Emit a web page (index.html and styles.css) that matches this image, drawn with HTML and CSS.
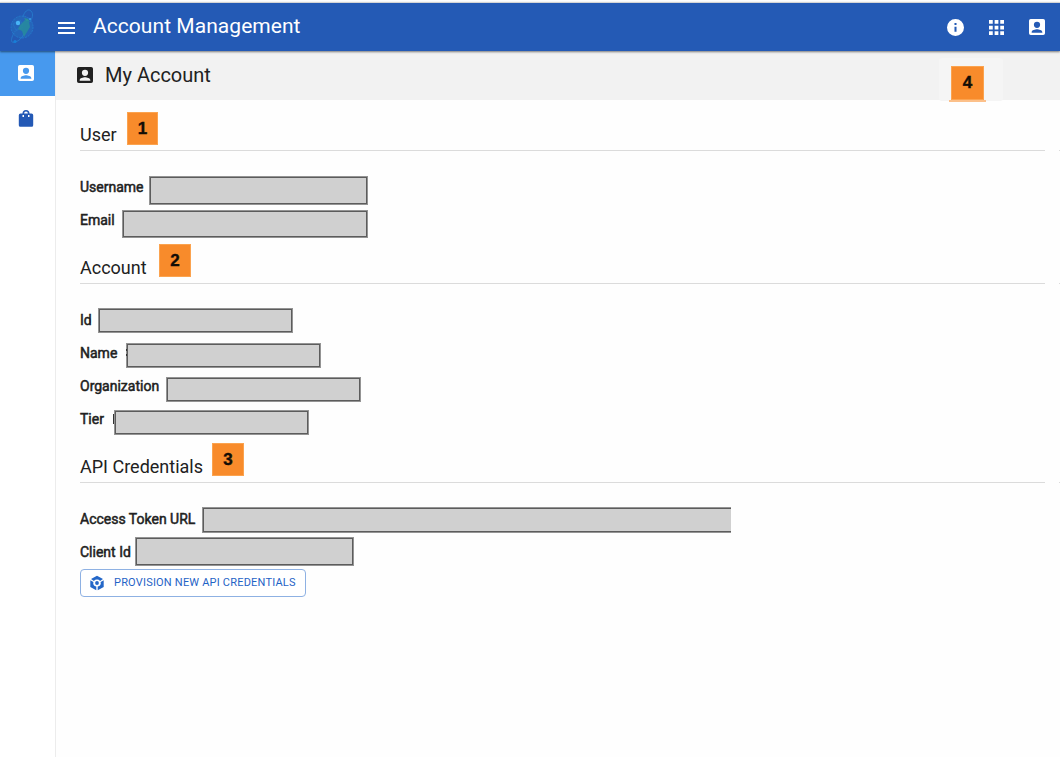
FILE: index.html
```html
<!DOCTYPE html>
<html lang="en">
<head>
<meta charset="utf-8">
<title>Account Management</title>
<link rel="stylesheet" href="styles.css">
</head>
<body>
<header class="topbar">
  <svg class="logo" viewBox="0 0 34 40" width="34" height="40">
    <g fill="none" stroke="#2581d0" stroke-width="1">
      <circle cx="17" cy="20" r="11" fill="#2565ba" stroke-opacity=".7" stroke-dasharray="2 1"/>
      <path d="M18 10C19 5 23 1 26 4c3 3 1 8-1 11M9 26C6 31 5 37 10 35c4-1 7-4 9-8" opacity=".75"/>
      <path d="M8 17l7-4 3 5-7 5zM9 25l9-5" opacity=".4"/>
    </g>
    <path d="M15 18l5-5 4 2 1 5-3 5-3 5-2-6-4-2z" fill="#278f9b" opacity=".8"/>
    <path d="M19 11l4 1 2 3-4-1z" fill="#278f9b"/>
    <circle cx="13" cy="16" r="2.2" fill="#48b5f7"/><circle cx="10" cy="34.500" r="1.600" fill="#187ed8"/><circle cx="25" cy="12" r="1" fill="#3b9de6"/>
  </svg>
  <svg class="menu" viewBox="0 0 17 12" width="17" height="12"><path d="M0 1h17M0 6h17M0 11h17" stroke="#fff" stroke-width="2"/></svg>
  <h1 class="app-title">Account Management</h1>
  <nav class="tools">
    <svg viewBox="2 2 20 20" width="17" height="17"><path fill="#fff" d="M12 2a10 10 0 1 0 0 20 10 10 0 0 0 0-20zm1.200 15h-2.400v-6h2.400zm0-8h-2.400V6.700h2.400z"/></svg>
    <svg viewBox="4 4 16 16" width="15" height="15"><path fill="#fff" d="M4 8h4V4H4zm6 12h4v-4h-4zm-6 0h4v-4H4zm0-6h4v-4H4zm6 0h4v-4h-4zm6-10v4h4V4zm-6 4h4V4h-4zm6 6h4v-4h-4zm0 6h4v-4h-4z"/></svg>
    <svg viewBox="3 3 18 18" width="16" height="16"><path fill="#fff" d="M3 5v14a2 2 0 0 0 2 2h14a2 2 0 0 0 2-2V5a2 2 0 0 0-2-2H5a2 2 0 0 0-2 2zm12.500 4.500a3.500 3.500 0 1 1-7 0 3.500 3.500 0 0 1 7 0zm-9.500 8c0-2 4-3.100 6-3.100s6 1.100 6 3.100v1H6z"/></svg>
  </nav>
</header>
<div class="shell">
  <aside class="side">
    <div class="side-item active"><svg viewBox="3 3 18 18" width="16" height="16"><path fill="#fff" d="M3 5v14a2 2 0 0 0 2 2h14a2 2 0 0 0 2-2V5a2 2 0 0 0-2-2H5a2 2 0 0 0-2 2zm12.500 4.500a3.500 3.500 0 1 1-7 0 3.500 3.500 0 0 1 7 0zm-9.500 8c0-2 4-3.100 6-3.100s6 1.100 6 3.100v1H6z"/></svg></div>
    <div class="side-item"><svg viewBox="0 0 16 18" width="16" height="18"><path fill="#2459b5" fill-rule="evenodd" d="M4.500 4.500a3.500 3.500 0 0 1 7 0h2a1.700 1.700 0 0 1 1.700 1.700v10a1.500 1.500 0 0 1-1.500 1.500H2.300a1.500 1.500 0 0 1-1.500-1.500v-10a1.700 1.700 0 0 1 1.700-1.700zm1.600 0h3.800a1.900 1.900 0 0 0-3.800 0zM4.500 6v2H6V6zm5.500 0v2h1.500V6z"/></svg></div>
  </aside>
  <main class="main">
    <div class="page-head">
      <svg viewBox="3 3 18 18" width="16" height="16"><path fill="#212121" d="M3 5v14a2 2 0 0 0 2 2h14a2 2 0 0 0 2-2V5a2 2 0 0 0-2-2H5a2 2 0 0 0-2 2zm12.500 4.500a3.500 3.500 0 1 1-7 0 3.500 3.500 0 0 1 7 0zm-9.500 8c0-2 4-3.100 6-3.100s6 1.100 6 3.100v1H6z"/></svg>
      <h2 class="page-title">My Account</h2>
      <div class="head-action"><span class="badge badge-4">4</span></div>
    </div>
    <div class="content">
      <section>
        <div class="heading"><h3 class="h-user">User</h3><span class="badge badge-1">1</span></div>
        <div class="fields">
          <div class="row"><span class="label l-username">Username</span><span class="value v-username"></span></div>
          <div class="row"><span class="label l-email">Email</span><span class="value v-email"></span></div>
        </div>
      </section>
      <section>
        <div class="heading"><h3 class="h-account">Account</h3><span class="badge badge-2">2</span></div>
        <div class="fields">
          <div class="row"><span class="label l-id">Id</span><span class="value v-id"></span></div>
          <div class="row"><span class="label l-name">Name</span><span class="value v-name"></span></div>
          <div class="row"><span class="label l-org">Organization</span><span class="value v-org"></span></div>
          <div class="row"><span class="label l-tier">Tier</span><span class="value v-tier"></span></div>
        </div>
      </section>
      <section>
        <div class="heading"><h3 class="h-api">API Credentials</h3><span class="badge badge-3">3</span></div>
        <div class="fields">
          <div class="row"><span class="label l-url">Access Token URL</span><span class="value v-url"></span></div>
          <div class="row"><span class="label l-client">Client Id</span><span class="value v-client"></span></div>
        </div>
        <button class="provision">
          <svg viewBox="0 0 16 16" width="16" height="16"><g fill="#2467c8"><path d="M8 .8l6 3.300-2.900 1.800a4.200 4.200 0 0 0-6.200 0L2 4.100z"/><path d="M1.300 5.200L4.400 7a3.800 3.800 0 0 0 2.900 4.600v3.600l-6-3.300z"/><path d="M14.700 5.200L11.600 7a3.800 3.800 0 0 1-2.900 4.600v3.600l6-3.300z"/><circle cx="8" cy="8" r="1.900"/></g></svg>
          <span>PROVISION NEW API CREDENTIALS</span>
        </button>
      </section>
    </div>
  </main>
</div>
</body>
</html>
```
FILE: styles.css
```css
* { box-sizing: border-box; }
body {
  margin: 0;
  height: 757px;
  overflow: hidden;
  display: flex;
  flex-direction: column;
  background: #fefefe;
  color: #212121;
  font-family: Roboto, sans-serif;
}
h1, h2, h3 { margin: 0; font-weight: 400; white-space: nowrap; }
svg { display: block; flex: none; }

.topbar {
  position: relative;
  z-index: 1;
  height: 49px;
  flex: none;
  margin-top: 2px;
  border-top: 1px solid #d5d5d5;
  background: #245ab5;
  box-shadow: 0 1px 2px rgba(0, 0, 0, .5);
  display: flex;
  align-items: center;
  padding: 0 15px 0 5px;
}
.menu { margin: 1px 0 0 19px; }
.app-title { margin: -2px 0 0 18px; font-size: 21px; line-height: 28px; letter-spacing: .05px; color: #fff; }
.tools { margin-left: auto; display: flex; align-items: center; gap: 25px; }

.shell { display: flex; flex: 1; min-height: 0; }
.side { width: 56px; flex: none; border-right: 1px solid #ececec; background: #fff; }
.side-item { width: 55px; height: 45px; display: flex; align-items: center; justify-content: center; padding: 0 3px 1px 0; }
.side-item.active { background: #4799ee; }
.main { flex: 1; min-width: 0; }

.page-head { height: 49px; background: #f2f2f2; display: flex; align-items: center; padding: 0 57px 1px 21px; }
.page-title { margin-left: 12px; font-size: 20px; }
.head-action { margin-left: auto; align-self: flex-start; margin-top: 7px; width: 64px; height: 43px; padding: 8px 0 0 12px; background: #f5f5f5; border-radius: 3px; }

.badge {
  display: flex;
  align-items: center;
  justify-content: center;
  flex: none;
  align-self: flex-start;
  width: 31px;
  height: 33px;
  background: #f88b2b;
  border: 1px solid #fba34f;
  color: #120d06;
  font: bold 17px "Liberation Sans", Arial, sans-serif;
  -webkit-text-stroke: .4px #120d06;
}
.badge-1 { margin-top: 8px; width: 31px; padding-top: 1px; }
.badge-2 { margin-top: 7px; width: 32px; padding-top: 1px; }
.badge-3 { margin-top: 7px; width: 32px; padding-top: 1px; }
.badge-4 { position: relative; width: 33px; height: 34px; }
.badge-4::after { content: ""; position: absolute; left: -3px; top: 33px; width: 37px; height: 2px; background: #fcc08a; }

.content { padding: 4px 15px 0 24px; }
.heading { position: relative; height: 47px; display: flex; border-bottom: 1px solid #dbdbdb; }
.heading::after { content: ""; position: absolute; right: -15px; bottom: -1px; width: 1px; height: 1px; background: #dbdbdb; }
.heading h3 { font-size: 18px; line-height: 24px; padding-top: 19px; }
.h-user { width: 47px; }
.h-account { width: 79px; }
.h-api { width: 132px; }

.fields { padding-top: 20px; }
.row { height: 33px; display: flex; align-items: flex-start; }
.label { font-size: 14px; line-height: 20px; padding-top: 6px; white-space: nowrap; flex: none; -webkit-text-stroke: .5px #212121; }
.value { flex: none; width: 195px; height: 25px; background: #d0d0d0; border: 1px solid #949494; box-shadow: inset 0 0 0 1px #5c5c5c; }
.l-username { width: 69px; } .v-username { width: 219px; height: 29px; margin-top: 5px; }
.l-email { width: 42px; } .v-email { width: 246px; height: 28px; margin-top: 6px; }
.l-id { width: 18px; } .v-id { margin-top: 4px; }
.l-name { width: 46px; } .v-name { margin-top: 6px; }
.l-org { width: 86px; } .v-org { margin-top: 7px; }
.l-tier { width: 34px; } .v-tier { margin-top: 7px; }
.v-name, .v-tier { position: relative; }
.v-name::before { content: ""; position: absolute; left: -1px; top: 5px; width: 1px; height: 7px; background: linear-gradient(#333 2px, transparent 2px 5px, #333 5px); }
.v-tier::before { content: ""; position: absolute; left: -2px; top: 3px; width: 1px; height: 10px; background: #333; }
.l-url { width: 122px; } .v-url { width: 529px; height: 26px; margin-top: 4px; border-right: 0; box-shadow: inset 1px 1px #5c5c5c, inset 0 -1px #5c5c5c; }
.l-client { width: 55px; } .v-client { width: 219px; height: 29px; margin-top: 1px; }

.provision {
  display: flex;
  align-items: center;
  width: 226px;
  height: 28px;
  padding: 0 0 0 8px;
  gap: 9px;
  border: 1px solid #8eb1e3;
  border-radius: 4px;
  background: #fff;
  color: #1f63c6;
  font: 400 11px Roboto, sans-serif;
  letter-spacing: .2px;
  white-space: nowrap;
}
.provision span { margin-top: -2px; }
```
